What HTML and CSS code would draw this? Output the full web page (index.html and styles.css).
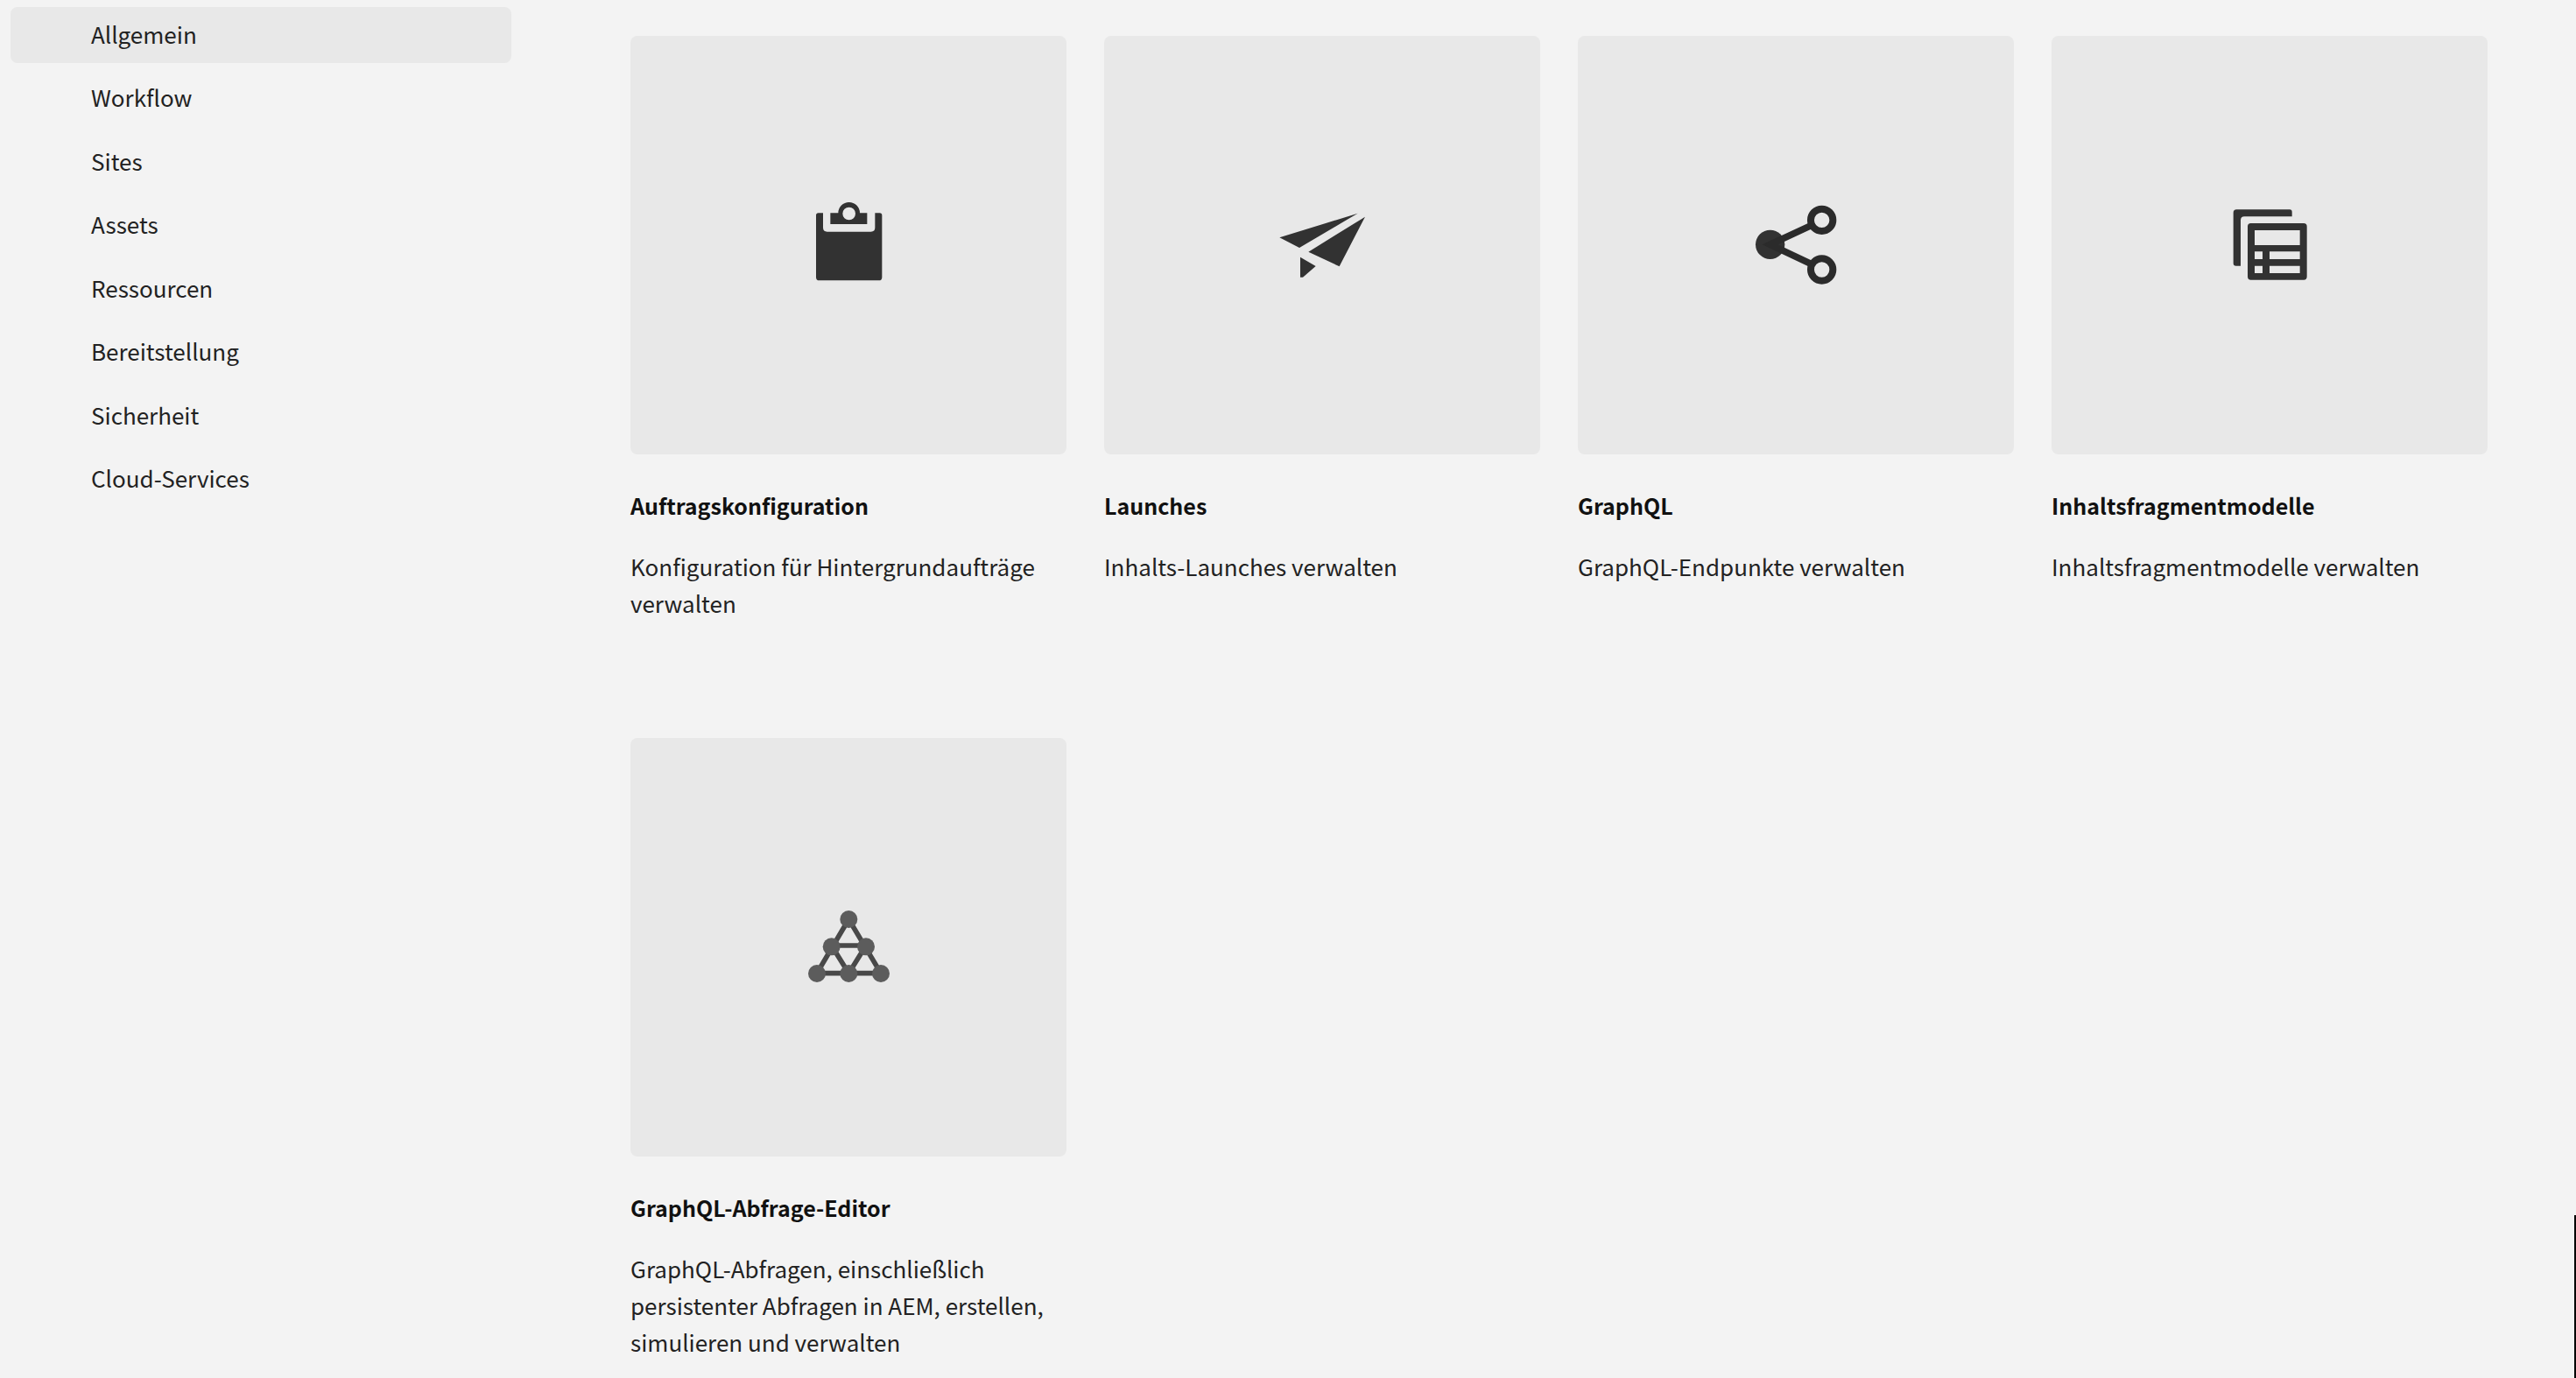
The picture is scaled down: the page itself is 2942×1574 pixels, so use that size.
FILE: index.html
```html
<!DOCTYPE html>
<html lang="de">
<head>
<meta charset="utf-8">
<meta name="viewport" content="width=device-width, initial-scale=1">
<title>Tools</title>
<link rel="stylesheet" href="styles.css">
</head>
<body>
<div class="page">
  <nav class="sidebar" aria-label="Tools">
    <ul class="nav-list">
      <li><a class="nav-link is-active" href="#allgemein" aria-current="page">Allgemein</a></li>
      <li><a class="nav-link" href="#workflow">Workflow</a></li>
      <li><a class="nav-link" href="#sites">Sites</a></li>
      <li><a class="nav-link" href="#assets">Assets</a></li>
      <li><a class="nav-link" href="#ressourcen">Ressourcen</a></li>
      <li><a class="nav-link" href="#bereitstellung">Bereitstellung</a></li>
      <li><a class="nav-link" href="#sicherheit">Sicherheit</a></li>
      <li><a class="nav-link" href="#cloud-services">Cloud-Services</a></li>
    </ul>
  </nav>
  <main class="cards">
    <a class="card" href="#auftragskonfiguration">
      <span class="tile">
        <svg class="icon" viewBox="-3 -2 420 420" aria-hidden="true">
          <path d="M104 98H120V148Q120 162 134 162H284Q298 162 298 148V98H314Q322 98 322 106V318Q322 329 311 329H107Q96 329 96 318V106Q96 98 104 98Z"/>
          <path fill-rule="evenodd" d="M145 98H172A37 37 0 0 1 246 98H271V136H145ZM209 78A22 22 0 1 0 209 122A22 22 0 1 0 209 78Z"/>
        </svg>
      </span>
      <h2 class="card-title">Auftragskonfiguration</h2>
      <p class="card-text">Konfiguration für Hintergrundaufträge verwalten</p>
    </a>
    <a class="card" href="#launches">
      <span class="tile">
        <svg class="icon" viewBox="0 -30 420 420" aria-hidden="true">
          <path d="M64 154L332 71L132 189ZM357 83L269 253L163 203ZM135 221L188 252L144 290H135Z"/>
        </svg>
      </span>
      <h2 class="card-title">Launches</h2>
      <p class="card-text">Inhalts-Launches verwalten</p>
    </a>
    <a class="card" href="#graphql">
      <span class="tile">
        <svg class="icon" viewBox="4 0 420 420" aria-hidden="true">
          <circle cx="126" cy="208" r="50"/>
          <path class="stroke" stroke-width="23" d="M268 142L126 208L268 275"/>
          <circle class="stroke" stroke-width="24" cx="303" cy="124" r="38"/>
          <circle class="stroke" stroke-width="24" cx="303" cy="294" r="38"/>
        </svg>
      </span>
      <h2 class="card-title">GraphQL</h2>
      <p class="card-text">GraphQL-Endpunkte verwalten</p>
    </a>
    <a class="card" href="#inhaltsfragmentmodelle">
      <span class="tile">
        <svg class="icon" viewBox="-24 -30 420 420" aria-hidden="true">
          <path d="M73 58H255Q263 58 263 66V82H100Q87 82 87 95V251H71Q62 251 62 242V69Q62 58 73 58Z"/>
          <path fill-rule="evenodd" d="M122 105H303Q314 105 314 116V288Q314 299 303 299H122Q111 299 111 288V116Q111 105 122 105ZM135 129V180H290V129ZM135 202V228H162V202ZM186 202V228H290V202ZM135 251V276H162V251ZM186 251V276H290V251Z"/>
        </svg>
      </span>
      <h2 class="card-title">Inhaltsfragmentmodelle</h2>
      <p class="card-text">Inhaltsfragmentmodelle verwalten</p>
    </a>
    <a class="card" href="#graphql-abfrage-editor">
      <span class="tile">
        <svg class="icon icon-light" viewBox="-3 -24 420 420" aria-hidden="true">
          <path class="links" stroke-width="17" d="M208 90L99 275H318ZM149 180H267L208 275Z"/>
          <circle cx="208" cy="90" r="30"/>
          <circle cx="149" cy="184" r="30"/>
          <circle cx="267" cy="184" r="30"/>
          <circle cx="99" cy="276" r="30"/>
          <circle cx="208" cy="276" r="30"/>
          <circle cx="318" cy="276" r="30"/>
        </svg>
      </span>
      <h2 class="card-title">GraphQL-Abfrage-Editor</h2>
      <p class="card-text">GraphQL-Abfragen, einschließlich persistenter Abfragen in AEM, erstellen, simulieren und verwalten</p>
    </a>
  </main>
</div>
<div class="window-edge"></div>
</body>
</html>
```
FILE: styles.css
```css
* {
  box-sizing: border-box;
}

body {
  margin: 0;
  background: #f3f3f3;
  color: #222;
  font-family: "Noto Sans CJK SC", "Noto Sans", sans-serif;
  font-size: 26px;
  line-height: 42px;
}

a {
  color: inherit;
  text-decoration: none;
}

.page {
  display: flex;
  align-items: flex-start;
  gap: 136px;
  padding: 8px 101px 0 12px;
}

.sidebar {
  flex: 0 1 572px;
}

.nav-list {
  display: flex;
  flex-direction: column;
  justify-content: space-between;
  min-height: 571px;
  margin: 0;
  padding: 0;
  list-style: none;
}

.nav-link {
  display: block;
  padding: 10px 92px 12px;
  border-radius: 8px;
}

.nav-link.is-active {
  background: #e8e8e8;
}

.cards {
  flex: 1;
  display: grid;
  grid-template-columns: repeat(4, minmax(0, 1fr));
  gap: 133px 43px;
  padding-top: 33px;
}

.tile {
  display: flex;
  align-items: center;
  justify-content: center;
  aspect-ratio: 498 / 478;
  border-radius: 8px;
  background: #e8e8e8;
}

.icon {
  width: 140px;
  height: 140px;
  fill: #323232;
}

.icon .stroke {
  fill: none;
  stroke: #2b2b2b;
}

.icon-light {
  fill: #5c5c5c;
}

.icon .links {
  fill: none;
  stroke: #484848;
}

.card-title {
  margin: 37px 0 28px;
  color: #111;
  font-size: 25px;
  font-weight: 700;
  line-height: 42px;
}

.card-text {
  margin: 0;
}

/* Dark border of the neighbouring window */
.window-edge {
  position: fixed;
  right: 0;
  bottom: 0;
  width: 2px;
  height: 186px;
  background: #000;
}
```
